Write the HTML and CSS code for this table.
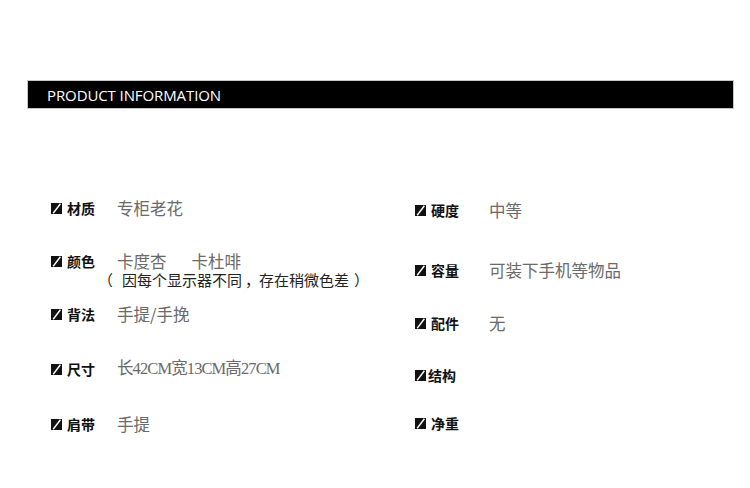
FILE: index.html
```html
<!DOCTYPE html>
<html lang="zh">
<head>
<meta charset="utf-8">
<title>Product Information</title>
<link rel="stylesheet" href="styles.css">
</head>
<body>
<div class="page">
  <div class="bar"><span class="bar-title">PRODUCT INFORMATION</span></div>
  <div class="grid">
    <div class="col col-left">
      <div class="row">
        <span class="label"><svg class="ico" viewBox="0 0 11 11"><rect width="11" height="11" fill="#111"/><path d="M2.2 10.2 L9.4 0.8" stroke="#fff" stroke-width="1.4"/></svg>材质</span>
        <span class="value">专柜老花</span>
      </div>
      <div class="row">
        <span class="label"><svg class="ico" viewBox="0 0 11 11"><rect width="11" height="11" fill="#111"/><path d="M2.2 10.2 L9.4 0.8" stroke="#fff" stroke-width="1.4"/></svg>颜色</span>
        <div class="value">
          <div class="line1">卡度杏<span class="sp"></span>卡杜啡</div>
          <div class="note"><span class="lp">（</span>因每个显示器不同<span class="cm">，</span>存在稍微色差<span class="rp">）</span></div>
        </div>
      </div>
      <div class="row">
        <span class="label"><svg class="ico" viewBox="0 0 11 11"><rect width="11" height="11" fill="#111"/><path d="M2.2 10.2 L9.4 0.8" stroke="#fff" stroke-width="1.4"/></svg>背法</span>
        <span class="value">手提/手挽</span>
      </div>
      <div class="row">
        <span class="label"><svg class="ico" viewBox="0 0 11 11"><rect width="11" height="11" fill="#111"/><path d="M2.2 10.2 L9.4 0.8" stroke="#fff" stroke-width="1.4"/></svg>尺寸</span>
        <span class="value serif">长42CM宽13CM高27CM</span>
      </div>
      <div class="row">
        <span class="label"><svg class="ico" viewBox="0 0 11 11"><rect width="11" height="11" fill="#111"/><path d="M2.2 10.2 L9.4 0.8" stroke="#fff" stroke-width="1.4"/></svg>肩带</span>
        <span class="value">手提</span>
      </div>
    </div>
    <div class="col col-right">
      <div class="row">
        <span class="label"><svg class="ico" viewBox="0 0 11 11"><rect width="11" height="11" fill="#111"/><path d="M2.2 10.2 L9.4 0.8" stroke="#fff" stroke-width="1.4"/></svg>硬度</span>
        <span class="value">中等</span>
      </div>
      <div class="row">
        <span class="label"><svg class="ico" viewBox="0 0 11 11"><rect width="11" height="11" fill="#111"/><path d="M2.2 10.2 L9.4 0.8" stroke="#fff" stroke-width="1.4"/></svg>容量</span>
        <span class="value">可装下手机等物品</span>
      </div>
      <div class="row">
        <span class="label"><svg class="ico" viewBox="0 0 11 11"><rect width="11" height="11" fill="#111"/><path d="M2.2 10.2 L9.4 0.8" stroke="#fff" stroke-width="1.4"/></svg>配件</span>
        <span class="value">无</span>
      </div>
      <div class="row">
        <span class="label tight"><svg class="ico" viewBox="0 0 11 11"><rect width="11" height="11" fill="#111"/><path d="M2.2 10.2 L9.4 0.8" stroke="#fff" stroke-width="1.4"/></svg>结构</span>
        <span class="value"></span>
      </div>
      <div class="row">
        <span class="label"><svg class="ico" viewBox="0 0 11 11"><rect width="11" height="11" fill="#111"/><path d="M2.2 10.2 L9.4 0.8" stroke="#fff" stroke-width="1.4"/></svg>净重</span>
        <span class="value"></span>
      </div>
    </div>
  </div>
</div>
</body>
</html>
```
FILE: styles.css
```css
html, body {
  margin: 0;
  padding: 0;
  background: #fff;
}
.page {
  width: 750px;
  height: 488px;
  padding-top: 81px;
  box-sizing: border-box;
  font-family: "Noto Sans CJK SC", "Noto Sans", sans-serif;
}
.bar {
  margin-left: 28px;
  width: 705px;
  height: 27px;
  background: #000;
  box-shadow: 0 0 0 1px #c8c8c8;
  display: flex;
  align-items: center;
}
.bar-title {
  margin-left: 19px;
  color: #fff;
  font-family: "Open Sans", "Noto Sans", sans-serif;
  font-size: 15px;
  letter-spacing: -0.1px;
}
.grid {
  display: grid;
  grid-template-columns: 364px 1fr;
  padding-left: 51px;
}
.col {
  display: flex;
  flex-direction: column;
}
.col-left {
  padding-top: 90px;
}
.col-right {
  padding-top: 92px;
}
.row {
  display: flex;
  align-items: flex-start;
}
.col-left .row:nth-child(1) { height: 53px; }
.col-left .row:nth-child(2) { height: 53px; }
.col-left .row:nth-child(3) { height: 55px; }
.col-left .row:nth-child(4) { height: 55px; }
.col-right .row:nth-child(1) { height: 60px; }
.col-right .row:nth-child(2) { height: 53px; }
.col-right .row:nth-child(3) { height: 52px; }
.col-right .row:nth-child(4) { height: 48px; }
.label {
  display: flex;
  align-items: center;
  height: 20px;
  width: 66px;
  flex: none;
  font-size: 14px;
  font-weight: bold;
  color: #111;
}
.col-right .label {
  width: 74px;
}
.ico {
  width: 11px;
  height: 11px;
  margin-right: 5px;
  flex: none;
}
.label.tight .ico {
  margin-right: 2px;
}
.value {
  font-size: 16.5px;
  line-height: 20px;
  color: #6a6a6a;
}
.line1 {
  height: 19px;
}
.serif {
  font-family: "Liberation Serif", "Noto Sans CJK SC", serif;
  letter-spacing: -0.9px;
}
.sp {
  display: inline-block;
  width: 25px;
}
.note {
  margin-left: -19px;
  font-size: 15px;
  line-height: 19px;
  color: #222;
  white-space: nowrap;
}
.lp {
  display: inline-block;
  margin-right: 9px;
}
.cm {
  display: inline-block;
  margin-left: 3px;
  margin-right: -1px;
}
.rp {
  display: inline-block;
  margin-left: 5px;
}
```
